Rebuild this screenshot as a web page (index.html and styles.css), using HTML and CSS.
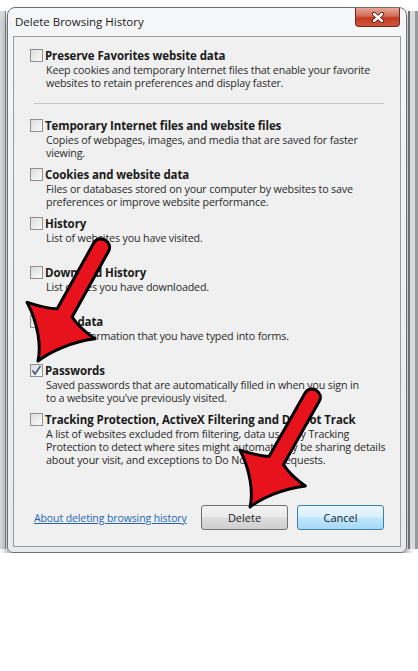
FILE: index.html
```html
<!DOCTYPE html>
<html lang="en">
<head>
    <meta charset="UTF-8">
    <meta name="viewport" content="width=device-width, initial-scale=1.0">
    <title>Delete Browsing History</title>
    <link rel="stylesheet" href="styles.css">
</head>
<body>
    <div class="desk">
        <div class="edge edge-left"></div>
        <div class="window">
            <div class="title-bar">
                <span class="title">Delete Browsing History</span>
                <button class="close-btn" aria-label="Close">
                    <svg width="14" height="11" viewBox="0 0 14 11">
                        <path d="M3 2 L11 9 M11 2 L3 9" stroke="#5a1a10" stroke-width="4.2" stroke-linecap="round"/>
                        <path d="M3 2 L11 9 M11 2 L3 9" stroke="#ffffff" stroke-width="2.4" stroke-linecap="round"/>
                    </svg>
                </button>
            </div>
            <div class="client">
                <div class="option">
                    <label class="option-title"><span class="check"></span>Preserve Favorites website data</label>
                    <p class="option-desc">Keep cookies and temporary Internet files that enable your favorite<br>websites to retain preferences and display faster.</p>
                </div>
                <hr class="separator">
                <div class="option">
                    <label class="option-title"><span class="check"></span>Temporary Internet files and website files</label>
                    <p class="option-desc">Copies of webpages, images, and media that are saved for faster<br>viewing.</p>
                </div>
                <div class="option">
                    <label class="option-title"><span class="check"></span>Cookies and website data</label>
                    <p class="option-desc">Files or databases stored on your computer by websites to save<br>preferences or improve website performance.</p>
                </div>
                <div class="option">
                    <label class="option-title"><span class="check"></span>History</label>
                    <p class="option-desc">List of websites you have visited.</p>
                </div>
                <div class="option">
                    <label class="option-title"><span class="check"></span>Download History</label>
                    <p class="option-desc">List of files you have downloaded.</p>
                </div>
                <div class="option">
                    <label class="option-title"><span class="check"></span>Form data</label>
                    <p class="option-desc">Saved information that you have typed into forms.</p>
                </div>
                <div class="option">
                    <label class="option-title"><span class="check checked">
                        <svg width="11" height="11" viewBox="0 0 11 11"><path d="M1.5 5.5 L4 9 L9.5 1" fill="none" stroke="#4a5f8c" stroke-width="1.8"/></svg>
                    </span>Passwords</label>
                    <p class="option-desc">Saved passwords that are automatically filled in when you sign in<br>to a website you've previously visited.</p>
                </div>
                <div class="option option-last">
                    <label class="option-title"><span class="check"></span>Tracking Protection, ActiveX Filtering and Do Not Track</label>
                    <p class="option-desc">A list of websites excluded from filtering, data used by Tracking<br>Protection to detect where sites might automatically be sharing details<br>about your visit, and exceptions to Do Not Track requests.</p>
                </div>
                <div class="button-row">
                    <a class="help-link" href="#">About deleting browsing history</a>
                    <div class="buttons">
                        <button class="btn">Delete</button>
                        <button class="btn btn-default">Cancel</button>
                    </div>
                </div>
            </div>
        </div>
        <div class="edge edge-right"></div>
    </div>

    <svg class="arrows" width="418" height="671" viewBox="0 0 418 671">
        <defs>
            <path id="arrow" d="M0 0 C-4 -14 -18 -33 -38 -46 C-28 -48 -18 -50 -8.5 -55 L-8.5 -130 C-8.5 -141 8.5 -141 8.5 -130 L8.5 -55 C18 -50 28 -48 39 -47 C20 -33 6 -14 0 0 Z"/>
        </defs>
        <use href="#arrow" class="arrow" transform="translate(38 361) rotate(29)"/>
        <use href="#arrow" class="arrow" transform="translate(250 507) rotate(29.5) scale(0.97)"/>
    </svg>
</body>
</html>
```

FILE: styles.css
```css
body {
    margin: 0;
    padding: 0;
    background-color: #ffffff;
    font-family: "Open Sans", "Noto Sans", sans-serif;
    color: #1b1b1b;
}

.desk {
    display: flex;
    align-items: flex-start;
    padding-top: 7px;
}

.edge {
    margin-top: 4px;
    height: 538px;
    background-color: #d9dbde;
}

.edge-left {
    width: 6px;
    margin-right: 1px;
    border-right: 1px solid #8a8a8a;
    box-sizing: border-box;
}

.edge-right {
    width: 10px;
    margin-left: 1px;
    border-left: 2px solid #6f6f6f;
    border-right: 3px solid #9a9a9a;
    box-sizing: border-box;
}

.window {
    width: 400px;
    height: 546px;
    box-sizing: border-box;
    border: 1px solid #707070;
    border-radius: 8px 8px 6px 6px;
    background: linear-gradient(#f5f6f7, #e8eaec);
    box-shadow: 0px 6px 9px rgba(0, 0, 0, 0.45);
    display: flex;
    flex-direction: column;
    padding: 0 5px 5px 5px;
}

.title-bar {
    height: 28px;
    display: flex;
    align-items: flex-start;
    justify-content: space-between;
}

.title {
    font-size: 11.5px;
    padding: 6px 0 0 2px;
    color: #1a1a1a;
}

.close-btn {
    width: 45px;
    height: 19px;
    border: 1px solid #6b2a20;
    border-top: none;
    border-radius: 0 0 4px 4px;
    background: linear-gradient(#e6a899 0%, #d46a55 45%, #c23b22 55%, #d0543c 100%);
    display: flex;
    align-items: center;
    justify-content: center;
    padding: 0;
    margin-right: 1px;
}

.client {
    flex: 1;
    background-color: #f0f0f0;
    border: 1px solid #9a9a9a;
    padding: 9px 16px 0 16px;
    display: flex;
    flex-direction: column;
}

.option {
    height: 49px;
}

.option-last {
    height: 70px;
}

.option-title {
    display: flex;
    align-items: center;
    height: 18px;
    font-size: 11.5px;
    font-weight: bold;
    letter-spacing: -0.1px;
}

.check {
    width: 13px;
    height: 13px;
    box-sizing: border-box;
    border: 1px solid #8e8f8f;
    background: linear-gradient(135deg, #dcdcdc, #fbfbfb);
    margin-right: 2px;
    display: flex;
    align-items: center;
    justify-content: center;
}

.option-desc {
    margin: 0 0 0 16px;
    font-size: 10.7px;
    line-height: 13px;
    color: #2a2a2a;
    letter-spacing: -0.15px;
    white-space: nowrap;
}

.separator {
    border: none;
    border-top: 1px solid #c8c8c8;
    margin: 8px 0 12px 4px;
}

.button-row {
    display: flex;
    align-items: center;
    justify-content: space-between;
    margin-top: 25px;
    padding-left: 4px;
}

.help-link {
    font-size: 10.5px;
    color: #1c66b3;
    letter-spacing: -0.1px;
}

.buttons {
    display: flex;
    gap: 9px;
}

.btn {
    width: 87px;
    height: 25px;
    border: 1px solid #707070;
    border-radius: 3px;
    background: linear-gradient(#f2f2f2 0%, #ebebeb 48%, #dddddd 52%, #cfcfcf 100%);
    font-family: "Open Sans", "Noto Sans", sans-serif;
    font-size: 11px;
    color: #1b1b1b;
    padding: 0;
}

.btn-default {
    border-color: #3c7fb1;
    background: linear-gradient(#eaf6fd 0%, #d9f0fc 48%, #bee6fd 52%, #a7d9f5 100%);
}

.arrows {
    position: absolute;
    top: 0;
    left: 0;
    pointer-events: none;
}

.arrow {
    fill: #e8121c;
    stroke: #000000;
    stroke-width: 3;
    stroke-linejoin: round;
}
```
